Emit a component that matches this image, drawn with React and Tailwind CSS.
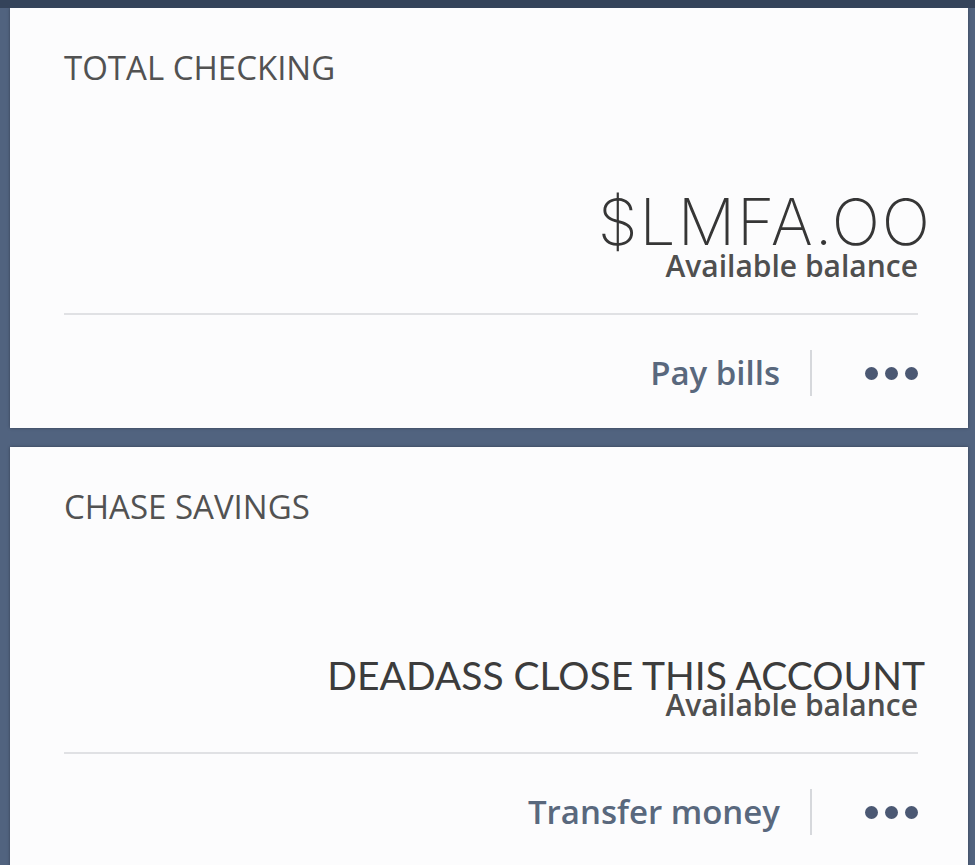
const sans = { fontFamily: '"Open Sans", "Noto Sans", sans-serif' };

function Dots() {
  return (
    <div className="flex items-center gap-[7px]">
      <span className="block w-[13px] h-[13px] rounded-full bg-[#4b5873]" />
      <span className="block w-[13px] h-[13px] rounded-full bg-[#4b5873]" />
      <span className="block w-[13px] h-[13px] rounded-full bg-[#4b5873]" />
    </div>
  );
}

function Actions({ label }) {
  return (
    <div className="mt-[30px] h-[56px] flex items-center justify-end">
      <span className="text-[33px] leading-[40px] font-semibold text-[#59687d] whitespace-nowrap">{label}</span>
      <span className="ml-[30px] w-[2px] h-[46px] bg-[#d6d8dc]" />
      <div className="ml-[53px]">
        <Dots />
      </div>
    </div>
  );
}

function Card({ title, children, action, className = "" }) {
  return (
    <div
      className={`h-[420px] flex flex-col pl-[54px] pr-[50px] pt-[40px] bg-[#fcfcfd] shadow-[0_0_3px_rgba(0,0,0,0.35)] ${className}`}
      style={sans}
    >
      <h2 className="text-[33px] leading-[40px] text-[#525252] whitespace-nowrap">{title}</h2>
      {children}
      <div className="mt-[33px] h-[2px] bg-[#e0e1e4]" />
      <Actions label={action} />
    </div>
  );
}

export default function App() {
  return (
    <div className="w-[975px] h-[865px] overflow-hidden bg-[#51637f] border-t-[8px] border-[#34435a] pl-[10px] pr-[7px]">
      <Card title="TOTAL CHECKING" action="Pay bills">
        <div className="mt-[106px] flex flex-col items-end">
          <div
            className="mr-[-14px] text-[64px] leading-[56px] font-extralight tracking-[2px] text-[#363636] whitespace-nowrap"
            style={{ fontFamily: 'Inter, "Open Sans", sans-serif' }}
          >
            $LMFA.OO
          </div>
          <div className="mt-[2px] text-[30px] leading-[28px] font-semibold text-[#4f4f4f] whitespace-nowrap">
            Available balance
          </div>
        </div>
      </Card>

      <Card title="CHASE SAVINGS" action="Transfer money" className="mt-[19px]">
        <div className="mt-[132px] flex flex-col items-end">
          <div
            className="mr-[-7px] text-[39px] leading-[32px] text-[#3c3c3c] whitespace-nowrap"
            style={{ fontFamily: 'Lato, "Open Sans", sans-serif' }}
          >
            DEADASS CLOSE THIS ACCOUNT
          </div>
          <div className="text-[30px] leading-[28px] font-semibold text-[#4f4f4f] whitespace-nowrap">
            Available balance
          </div>
        </div>
      </Card>
    </div>
  );
}
